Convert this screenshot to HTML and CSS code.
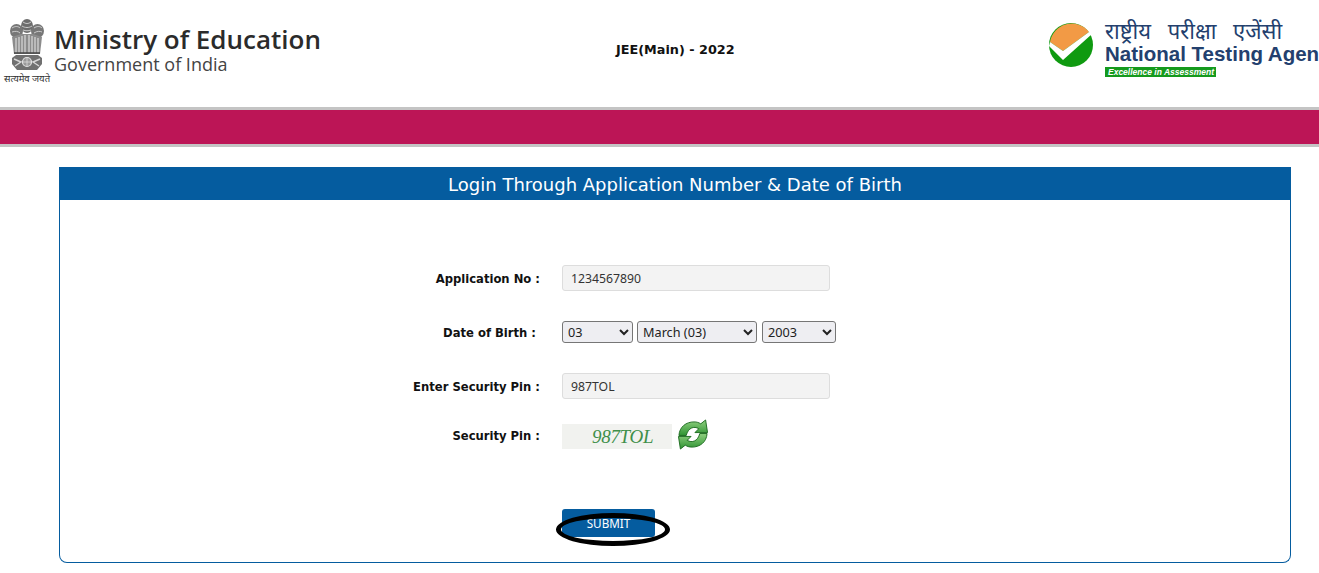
FILE: index.html
```html
<!DOCTYPE html>
<html lang="en">

<head>
    <meta charset="UTF-8">
    <meta name="viewport" content="width=device-width, initial-scale=1.0">
    <title>JEE(Main) - 2022</title>
    <link rel="stylesheet" href="styles.css">
</head>

<body>
    <!-- header -->
    <div class="header">
        <div class="ministry">
            <div class="emblem">
                <svg width="36" height="55" viewBox="0 0 36 55">
                    <!-- lions -->
                    <ellipse cx="18" cy="8" rx="6" ry="7" fill="#6d6d6d" />
                    <ellipse cx="7.5" cy="13" rx="6.5" ry="7" fill="#777" />
                    <ellipse cx="28.5" cy="13" rx="6.5" ry="7" fill="#777" />
                    <path d="M14 4c3 2 5 2 8 0M13 8c3 2 7 2 10 0M14 12c3 1 5 1 8 0M3 10c3-2 6-2 8 0M3 14c3-1 6-1 8 1M25 10c3-2 6-2 8 0M25 15c3-2 6-2 8-1" fill="none" stroke="#d4d4d4" stroke-width=".9" />
                    <path d="M3 19l9-3 12 0 9 3-2 17H5z" fill="#8c8c8c" />
                    <path d="M7 20v15M10 19v16M13 18v17M16 17v18M20 17v18M23 18v17M26 19v16M29 20v15" stroke="#e8e8e8" stroke-width="1" />
                    <path d="M5 35h26" stroke="#444" stroke-width="1.5" />
                    <!-- base -->
                    <path d="M7 37h22l4 3v6l-5 6H8l-5-6v-6z" fill="#707070" />
                    <circle cx="18" cy="44" r="4.5" fill="#9a9a9a" stroke="#e2e2e2" stroke-width="1.2" />
                    <path d="M18 40v8M14 44h8" stroke="#e2e2e2" stroke-width=".7" />
                    <path d="M5 41l7 3-6 4M31 41l-7 3 6 4" fill="none" stroke="#d6d6d6" stroke-width="1.4" />
                </svg>
                <span class="motto">सत्यमेव जयते</span>
            </div>
            <div class="ministry-text">
                <div class="ministry-name">Ministry of Education</div>
                <div class="ministry-sub">Government of India</div>
            </div>
        </div>
        <div class="exam">JEE(Main) - 2022</div>
        <div class="nta">
            <svg class="nta-mark" width="44" height="44" viewBox="0 0 44 44">
                <circle cx="22" cy="22" r="22" fill="#0f9a10" />
                <path d="M1 19A22 22 0 0 1 40 9L14 28z" fill="#f29a45" />
                <path d="M0 23l14 14L43 11l-3-2L14 28 1 19z" fill="#fff" />
            </svg>
            <div class="nta-text">
                <div class="nta-hindi">राष्ट्रीय परीक्षा एजेंसी</div>
                <div class="nta-name">National Testing Agency</div>
                <div class="nta-tag">Excellence in Assessment</div>
            </div>
        </div>
    </div>

    <div class="band"></div>

    <!-- login panel -->
    <div class="panel">
        <div class="panel-title">Login Through Application Number &amp; Date of Birth</div>
        <form class="login">
            <div class="row row-app">
                <label class="lbl">Application No :</label>
                <input class="txt" type="text" value="1234567890">
            </div>
            <div class="row row-dob">
                <label class="lbl lbl-dob">Date of Birth :</label>
                <div class="selects">
                    <select class="sel sel-day"><option>03</option></select>
                    <select class="sel sel-month"><option>March (03)</option></select>
                    <select class="sel sel-year"><option>2003</option></select>
                </div>
            </div>
            <div class="row row-pin">
                <label class="lbl">Enter Security Pin :</label>
                <input class="txt" type="text" value="987TOL">
            </div>
            <div class="row row-captcha">
                <label class="lbl">Security Pin :</label>
                <div class="captcha"><span>987TOL</span></div>
                <svg class="refresh" width="32" height="31" viewBox="0 0 32 32">
                    <defs>
                        <linearGradient id="arrowfill" x1="0" y1="0" x2="0" y2="1">
                            <stop offset="0" stop-color="#8fd07f" />
                            <stop offset="1" stop-color="#2f9333" />
                        </linearGradient>
                    </defs>
                    <path d="M1.5 17C2 8 9 3 17 3c3 0 5 .7 7 2l5-4 2 13H18l4-4c-5-3-11-1-13 7z" fill="url(#arrowfill)" stroke="#1f6d22" />
                    <path d="M30.5 15C30 24 23 29 15 29c-3 0-5-.7-7-2l-5 4-2-13h13l-4 4c5 3 11 1 13-7z" fill="url(#arrowfill)" stroke="#1f6d22" />
                </svg>
            </div>
            <div class="row row-submit">
                <div class="submit-wrap">
                    <button class="submit" type="button">SUBMIT</button>
                    <div class="circled"></div>
                </div>
            </div>
        </form>
    </div>
</body>

</html>
```

FILE: styles.css
```css
/* page */
html, body {
    margin: 0;
    padding: 0;
    overflow: hidden;
    background: #fff;
}

body {
    font-family: "DejaVu Sans", Verdana, sans-serif;
}

/* header */
.header {
    height: 107px;
    display: grid;
    grid-template-columns: 490px 1fr 270px;
    align-items: start;
    overflow: hidden;
}

.ministry {
    display: flex;
    padding: 18px 0 0 4px;
}

.emblem {
    width: 46px;
    display: flex;
    flex-direction: column;
    align-items: center;
}

.motto {
    font-family: "Noto Sans", "Liberation Serif", serif;
    font-size: 9.5px;
    line-height: 10px;
    margin-top: 1px;
    color: #333;
    white-space: nowrap;
}

.ministry-text {
    margin: 6px 0 0 4px;
    color: #2b2b2b;
    font-family: "Open Sans", "Noto Sans", sans-serif;
}

.ministry-name {
    font-size: 26px;
    line-height: 30px;
    font-weight: 600;
    white-space: nowrap;
}

.ministry-sub {
    margin-top: 1px;
    font-size: 18px;
    line-height: 18px;
    color: #444;
    white-space: nowrap;
}

.exam {
    padding-top: 42px;
    font-size: 12.8px;
    line-height: 15px;
    font-weight: bold;
    color: #111;
    margin-left: 126px;
    white-space: nowrap;
}

.nta {
    display: flex;
    padding: 23px 0 0 0;
    width: 270px;
    overflow: hidden;
}

.nta-mark {
    flex: none;
}

.nta-text {
    margin: -3px 0 0 12px;
    color: #23406e;
    white-space: nowrap;
}

.nta-hindi {
    font-family: "Noto Sans", "Liberation Sans", sans-serif;
    font-size: 22px;
    line-height: 20px;
    word-spacing: 11px;
}

.nta-name {
    font-family: "Liberation Sans", Arial, sans-serif;
    font-size: 20.5px;
    line-height: 26px;
    font-weight: bold;
    padding-top: 1px;
}

.nta-tag {
    width: 108px;
    padding-left: 3px;
    background: #159a1d;
    color: #fff;
    font-family: "Liberation Sans", Arial, sans-serif;
    font-size: 8.5px;
    line-height: 10px;
    font-weight: bold;
    font-style: italic;
}

/* crimson band */
.band {
    height: 34px;
    background: #bc1556;
    border-top: 3px solid #c4c4c4;
    border-bottom: 3px solid #c4c4c4;
}

/* panel */
.panel {
    width: 1230px;
    height: 395px;
    margin: 20px 0 0 59px;
    border: 1px solid #055c9f;
    border-top: 0;
    border-radius: 0 0 8px 8px;
}

.panel-title {
    height: 33px;
    margin: 0 -1px;
    background: #055c9f;
    color: #fff;
    font-size: 18px;
    line-height: 36px;
    text-align: center;
}

.login {
    padding-top: 65px;
}

.row {
    display: flex;
    align-items: center;
}

.lbl {
    width: 480px;
    flex: none;
    box-sizing: border-box;
    padding-top: 2px;
    text-align: right;
    font-size: 11.6px;
    font-weight: bold;
    color: #111;
    white-space: nowrap;
}

.lbl-dob {
    padding-right: 4px;
}

.txt, .selects {
    margin-left: 22px;
}

.txt {
    width: 268px;
    height: 26px;
    box-sizing: border-box;
    padding: 0 8px;
    background: #f3f3f3;
    border: 1px solid #ddd;
    border-radius: 3px;
    font-family: "Noto Sans", Tahoma, sans-serif;
    font-size: 12.25px;
    color: #333;
}

.row-dob {
    margin-top: 30px;
}

.row-pin {
    margin-top: 30px;
}

.row-captcha {
    margin-top: 20px;
}

.row-submit {
    margin-top: 59px;
    padding-left: 502px;
}

.selects {
    display: flex;
    gap: 4px;
}

.sel {
    height: 22px;
    box-sizing: border-box;
    padding-left: 1px;
    font-family: "Noto Sans", Tahoma, sans-serif;
    font-size: 12.7px;
    color: #222;
    background-color: #eeeef2;
    border: 1px solid #767676;
    border-radius: 3px;
}

.sel-day {
    width: 71px;
}

.sel-month {
    width: 120px;
}

.sel-year {
    width: 74px;
    margin-left: 1px;
}

.captcha {
    width: 80px;
    height: 25px;
    margin: 4px 0 0 22px;
    padding-left: 30px;
    background: #f1f2ef;
    color: #3f8f4a;
    font-family: "Liberation Serif", serif;
    font-size: 19px;
    letter-spacing: -.3px;
    line-height: 25px;
    font-style: italic;
    white-space: nowrap;
}

.refresh {
    margin-left: 5px;
}

.submit-wrap {
    position: relative;
}

.submit {
    display: block;
    width: 93px;
    height: 28px;
    background: #055c9f;
    border: 0;
    border-radius: 3px;
    color: #fff;
    font-family: "Noto Sans", Tahoma, sans-serif;
    font-size: 11.7px;
    padding: 0;
}

/* hand drawn ring over the button */
.circled {
    position: absolute;
    left: -6px;
    top: 4px;
    width: 114px;
    height: 33px;
    box-sizing: border-box;
    border: 5px solid #000;
    border-radius: 50%;
}
```
